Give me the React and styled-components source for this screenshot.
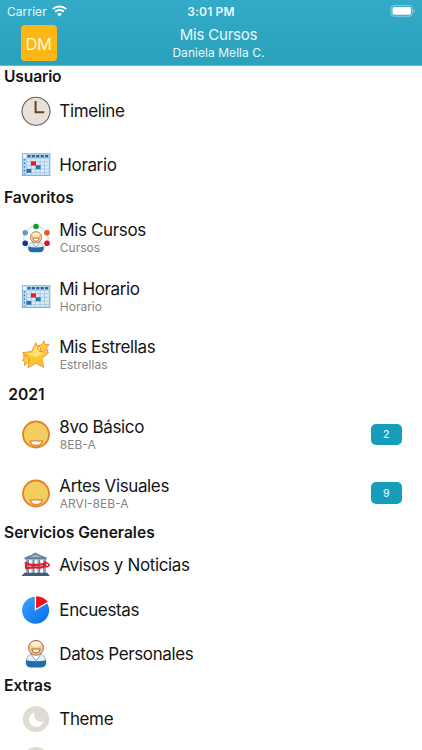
import React from 'react';
import styled, { createGlobalStyle } from 'styled-components';

const GlobalStyle = createGlobalStyle`
* { box-sizing: border-box; }
body {
  margin: 0;
  background: #fff;
  font-family: Inter, "Liberation Sans", sans-serif;
  overflow: hidden;
}
`

const Screen = styled.div`
width: 422px;
height: 750px;
overflow: hidden;
background: #fff;
color: #151515;
`

const Header = styled.header`
height: 66px;
background: linear-gradient(#33aac7, #2aa2bc);
border-bottom: 1px solid #62bdd0;
color: #e9f8fb;
`

const StatusBar = styled.div`
display: grid;
grid-template-columns: 1fr auto 1fr;
align-items: center;
height: 22px;
padding: 0 7px;
`

const Carrier = styled.div`
display: flex;
align-items: center;
gap: 5px;
font-size: 12px;
letter-spacing: 0.06px;
`

const Clock = styled.div`
font-size: 12px;
font-weight: 600;
letter-spacing: 0.15px;
`

const BatteryWrap = styled.div`
display: flex;
justify-content: flex-end;
padding-bottom: 1px;
`

const NavBar = styled.div`
display: grid;
grid-template-columns: 60px 1fr 42px;
height: 43px;
padding: 0 3px 0 0;
`

const Avatar = styled.div`
display: flex;
align-items: center;
justify-content: center;
width: 36px;
height: 36px;
margin: 3px 0 0 20.5px;
padding-top: 1px;
border-radius: 4px;
background: #fdb714;
color: #fff6d8;
font-size: 16.5px;
letter-spacing: -0.5px;
`

const NavTitles = styled.div`
display: flex;
flex-direction: column;
align-items: center;
padding-top: 3px;
`

const NavTitle = styled.div`
font-size: 15px;
line-height: 19px;
letter-spacing: -0.2px;
`

const NavSubtitle = styled.div`
font-size: 12px;
line-height: 17px;
letter-spacing: 0.05px;
`

const SectionTitle = styled.h2`
display: flex;
align-items: center;
height: ${p => p.$height || 21}px;
margin: 0;
padding-left: ${p => p.$indent || 4}px;
padding-bottom: 1px;
font-size: 15.6px;
font-weight: 600;
letter-spacing: ${p => p.$spacing || 0}px;
`

const Row = styled.div`
display: flex;
align-items: center;
height: ${p => p.$height || 44.5}px;
margin-bottom: ${p => p.$after || 0}px;
padding: 0 20.5px 0 21px;
`

const Labels = styled.div`
flex: 1;
padding-left: 8.3px;
padding-top: ${p => p.$single ? 1 : 0}px;
white-space: nowrap;
`

const Label = styled.div`
font-size: 17px;
line-height: 21px;
letter-spacing: -0.37px;
`

const SubLabel = styled.div`
padding-left: 0.5px;
margin-top: -1px;
padding-bottom: 1px;
font-size: 12px;
line-height: 15px;
color: #858585;
`

const Badge = styled.div`
display: flex;
align-items: center;
justify-content: center;
width: 30.5px;
height: 21.5px;
margin-bottom: 1px;
border-radius: 5px;
background: #169dba;
color: #e4f7fb;
font-size: 10.5px;
font-weight: 500;
`

const Svg = styled.svg`
display: block;
flex: none;
overflow: visible;
`

const Icon = ({ children }) => (
  <Svg width="30" height="30" viewBox="0 0 30 30" fill="none">{children}</Svg>
)

const WifiIcon = () => (
  <Svg width="15" height="12" viewBox="0 0 15 12" fill="none" stroke="#fff">
    <path d="M.8 4.1a9.6 9.6 0 0 1 13.4 0" strokeWidth="2" />
    <path d="M3.2 6.8a6.2 6.2 0 0 1 8.6 0" strokeWidth="1.9" />
    <path d="M7.5 11.4 5.1 8.9a3.5 3.5 0 0 1 4.8 0Z" fill="#fff" stroke="none" />
  </Svg>
)

const BatteryIcon = () => (
  <Svg width="25" height="12" viewBox="0 0 25 12">
    <rect x="1" y=".6" width="21.4" height="10.6" rx="2.8" fill="none" stroke="#8ed0df" />
    <rect x="2.5" y="2.1" width="18.4" height="7.6" rx="1.5" fill="#fff" />
    <path d="M23.6 4.2v3.4q1.2-.4 1.2-1.7t-1.2-1.7Z" fill="#8ed0df" />
  </Svg>
)

const ClockIcon = () => (
  <Icon>
    <circle cx="15" cy="15.3" r="14" fill="#e8e1da" stroke="#5d5d5d" strokeWidth="1.1" />
    <path d="M14.6 5v11.2h8.6" stroke="#68441d" strokeWidth="2" />
  </Icon>
)

const CalendarIcon = () => (
  <Icon>
    <rect x="1.3" y="3.8" width="27.6" height="21.8" fill="#bfdcf1" stroke="#6fa3cf" strokeWidth=".8" />
    <path d="M5.8 8.2h22v16h-22z" fill="#d8ebf7" />
    <path d="M2.2 4.6h3v3h-3z" fill="#f4faff" />
    <path d="M6.4 6.3h21.5" stroke="#2d649c" strokeWidth="2.4" strokeDasharray="3.2 1.2" />
    <path d="M3.4 9v15.5" stroke="#3976ad" strokeWidth="1.4" strokeDasharray="1.6 2" />
    <path d="M5.6 8.3v16.2M10.1 8.3v16.2M14.6 8.3v16.2M19.1 8.3v16.2M23.6 8.3v16.2M5.6 8.2h22.5M5.6 11.8h22.5M5.6 15.4h22.5M5.6 19h22.5M5.6 22.6h22.5" stroke="#8bb8dc" strokeWidth=".6" />
    <path d="M9.9 11.4h5v4.1h-5z" fill="#ea1825" />
    <path d="M14.8 15.2h4.8v4h-4.8zM5.5 18.9h4.8v3.8H5.5z" fill="#2772ac" />
  </Icon>
)

const PersonShape = () => (
  <>
    <path d="M5.1 25c0-6 1.5-9.3 6.3-10.7h7.2c4.8 1.4 6.3 4.7 6.3 10.7Z" fill="#e5eff8" stroke="#79a4cc" strokeWidth=".8" />
    <path d="m10 15 5 7 5-7" fill="#fff" stroke="#5c90c2" strokeWidth=".8" />
    <path d="M5 21.2q10 2 20 0v3.5q-.6 3.8-5 3.8H10q-4.4 0-5-3.8Z" fill="#216cad" />
    <circle cx="15" cy="8.8" r="7.4" fill="#fbcf86" stroke="#955643" strokeWidth=".9" />
    <ellipse cx="15" cy="5.2" rx="4.8" ry="2.6" fill="#fff0c8" />
    <path d="M10.7 10h8.6q-.5 4-4.3 4t-4.3-4Z" fill="#fff" stroke="#aa5f27" strokeWidth="1" />
  </>
)

const PersonIcon = () => <Icon><PersonShape /></Icon>

const GroupIcon = () => (
  <Icon>
    <circle cx="15" cy="15.5" r="12.2" stroke="#a9c3e0" strokeWidth=".8" />
    <g transform="translate(3.6 7.6) scale(.76)"><PersonShape /></g>
    <circle cx="15" cy="3.5" r="2.8" fill="#119e26" />
    <circle cx="4.2" cy="9.8" r="2.7" fill="#6796ca" />
    <circle cx="26" cy="9.8" r="2.8" fill="#f15721" />
    <circle cx="4.2" cy="20.2" r="2.8" fill="#173694" />
    <circle cx="26" cy="20.2" r="2.8" fill="#e50d2b" />
  </Icon>
)

const StarsIcon = () => (
  <Icon>
    <g fill="#ffce3b" stroke="#e59433" strokeWidth=".9" strokeLinejoin="round">
      <path d="m22.9.8 1 3.7 4.2-.1-2.8 3.3 1.7 3.6-4.2-1.4-3.4 2.3.1-4.2-2.9-2.3 4-.9Z" />
      <path d="m2.3 14.7 3.5 2 3-.8-1 4.1 1.5 3.3-3.4-.4-2.2 2.8-.2-4.1L1 20.1l2.2-1.7Z" />
      <path d="m14.7 2.8 3.8 8.5 9.2 1.1-6.8 6.3 1.8 8.7-7.8-4.2L7 27.7l1.6-9-7-6 9.2-1.3Z" fill="#ffc532" />
    </g>
    <path d="m14.7 5 3 7.1 7.2 1-10.2 3.8-9.6-3.2 6.6-1.1Z" fill="#ffe16d" />
  </Icon>
)

const SmileIcon = () => (
  <Icon>
    <circle cx="15" cy="14.5" r="13" fill="#f4cd60" stroke="#e48423" strokeWidth="1.9" />
    <path d="M9.3 20.8h11.9q-.7 4.5-4.6 4.5h-2.7q-3.9 0-4.6-4.5Z" fill="#fff" stroke="#e48423" strokeWidth="1.3" />
  </Icon>
)

const BankIcon = () => (
  <Icon>
    <path d="M3.6 7.4q6-1.6 10.8-5 5.5 3.4 11.2 5v2.2h-22Z" fill="#637e98" />
    <path d="M8 7.2q4-1.2 6.5-3 3 1.8 7 3Z" fill="#a5b8c8" />
    <path d="M6.6 9.5v14M12.1 9.5v14M17.9 9.5v14M23.4 9.5v14" stroke="#6f879f" strokeWidth="2.7" />
    <path d="M6 9.5v14M11.5 9.5v14M17.3 9.5v14M22.8 9.5v14" stroke="#b1c2d0" strokeWidth=".8" />
    <path d="M3.5 22.8h22.8l2.6 3.2H.4Z" fill="#405d79" />
    <path d="M4 12.2q3 3.1 11 2.7 7-.4 9.8-1.5M4.3 18.4q8-1.3 12.6-.8 5.2.4 8.2-2.6M5 14.3v3.7" stroke="#dc1f2c" strokeWidth="2.2" />
    <path d="M23 12.3q5.5 1.3 5.3 3.2-1.4 2-5.5.6 2.6-2.3 2-4.6" stroke="#dc1f2c" strokeWidth="1.5" />
  </Icon>
)

const PieIcon = () => (
  <Icon>
    <defs>
      <linearGradient id="pie" x1="0" y1="0" x2="1" y2="1">
        <stop stopColor="#38a4ff" />
        <stop offset="1" stopColor="#056be8" />
      </linearGradient>
    </defs>
    <circle cx="14.6" cy="15.3" r="13.5" fill="url(#pie)" />
    <path d="M14.4 14.7V.5Q22.5.2 27.9 6.9Z" fill="#f30d18" stroke="#fff" strokeWidth="1.3" />
  </Icon>
)

const MoonIcon = () => (
  <Icon>
    <circle cx="15" cy="15" r="13.1" fill="#dfdbd3" />
    <path d="M13.5 8.3a7.4 7.4 0 1 0 9 9.3 7.3 7.3 0 0 1-9-9.3Z" fill="#fff" />
  </Icon>
)

const RoundIcon = () => (
  <Icon>
    <circle cx="15" cy="12" r="13.1" fill="#dfdbd3" />
  </Icon>
)

const sections = [
  {
    title: 'Usuario', height: 22.5, spacing: -0.15,
    items: [
      { icon: ClockIcon, label: 'Timeline', after: 10 },
      { icon: CalendarIcon, label: 'Horario' },
    ],
  },
  {
    title: 'Favoritos',
    items: [
      { icon: GroupIcon, label: 'Mis Cursos', sub: 'Cursos' },
      { icon: CalendarIcon, label: 'Mi Horario', sub: 'Horario' },
      { icon: StarsIcon, label: 'Mis Estrellas', sub: 'Estrellas' },
    ],
  },
  {
    title: '2021', indent: 8.3,
    items: [
      { icon: SmileIcon, label: '8vo Básico', sub: '8EB-A', badge: 2 },
      { icon: SmileIcon, label: 'Artes Visuales', sub: 'ARVI-8EB-A', badge: 9 },
    ],
  },
  {
    title: 'Servicios Generales', height: 20,
    items: [
      { icon: BankIcon, label: 'Avisos y Noticias' },
      { icon: PieIcon, label: 'Encuestas' },
      { icon: PersonIcon, label: 'Datos Personales' },
    ],
  },
  {
    title: 'Extras', height: 20,
    items: [
      { icon: MoonIcon, label: 'Theme' },
      { icon: RoundIcon, label: '' },
    ],
  },
]

const App = () => {
  return (
    <Screen>
      <GlobalStyle />
      <Header>
        <StatusBar>
          <Carrier>Carrier <WifiIcon /></Carrier>
          <Clock>3:01 PM</Clock>
          <BatteryWrap><BatteryIcon /></BatteryWrap>
        </StatusBar>
        <NavBar>
          <Avatar>DM</Avatar>
          <NavTitles>
            <NavTitle>Mis Cursos</NavTitle>
            <NavSubtitle>Daniela Mella C.</NavSubtitle>
          </NavTitles>
        </NavBar>
      </Header>
      {sections.map(s => (
        <section key={s.title}>
          <SectionTitle $height={s.height} $indent={s.indent} $spacing={s.spacing}>{s.title}</SectionTitle>
          {s.items.map(({ icon: ItemIcon, ...item }) => (
            <Row key={item.label} $height={item.sub && 58.7} $after={item.after}>
              <ItemIcon />
              <Labels $single={!item.sub}>
                <Label>{item.label}</Label>
                {item.sub && <SubLabel>{item.sub}</SubLabel>}
              </Labels>
              {item.badge && <Badge>{item.badge}</Badge>}
            </Row>
          ))}
        </section>
      ))}
    </Screen>
  );
}

export default App;
